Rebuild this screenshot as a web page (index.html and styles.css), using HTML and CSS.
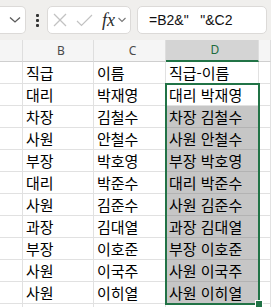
FILE: index.html
```html
<!doctype html>
<html lang="ko">
  <head>
    <meta charset="UTF-8" />
    <title>Sheet</title>
    <link rel="stylesheet" href="styles.css">
  </head>
  <body>
    <div class="toolbar">
      <div class="namebox">
        <svg class="chev" width="12" height="8" viewBox="0 0 12 8"><polyline points="1,1.5 6,6 11,1.5" /></svg>
      </div>
      <div class="dots"><span></span><span></span><span></span></div>
      <div class="btngroup">
        <svg class="btn-icon" width="14" height="14" viewBox="0 0 14 14"><line x1="1" y1="1" x2="13" y2="13" /><line x1="13" y1="1" x2="1" y2="13" /></svg>
        <svg class="btn-icon" width="17" height="13" viewBox="0 0 17 13"><polyline points="1,7 5.5,11.5 16,1" /></svg>
        <span class="fx">fx</span>
        <svg class="chev small" width="8" height="6" viewBox="0 0 8 6"><polyline points="0.5,1 4,4.5 7.5,1" /></svg>
      </div>
      <div class="formula">=B2&amp;"   "&amp;C2</div>
    </div>

    <div class="sheet">
      <div class="hd"></div>
      <div class="hd">B</div>
      <div class="hd">C</div>
      <div class="hd active">D</div>
      <div class="hd"></div>

      <div class="c"></div><div class="c">직급</div><div class="c">이름</div><div class="c">직급-이름</div><div class="c"></div>
      <div class="c"></div><div class="c">대리</div><div class="c">박재영</div><div class="c">대리 박재영</div><div class="c"></div>
      <div class="c"></div><div class="c">차장</div><div class="c">김철수</div><div class="c hl">차장 김철수</div><div class="c"></div>
      <div class="c"></div><div class="c">사원</div><div class="c">안철수</div><div class="c hl">사원 안철수</div><div class="c"></div>
      <div class="c"></div><div class="c">부장</div><div class="c">박호영</div><div class="c hl">부장 박호영</div><div class="c"></div>
      <div class="c"></div><div class="c">대리</div><div class="c">박준수</div><div class="c hl">대리 박준수</div><div class="c"></div>
      <div class="c"></div><div class="c">사원</div><div class="c">김준수</div><div class="c hl">사원 김준수</div><div class="c"></div>
      <div class="c"></div><div class="c">과장</div><div class="c">김대열</div><div class="c hl">과장 김대열</div><div class="c"></div>
      <div class="c"></div><div class="c">부장</div><div class="c">이호준</div><div class="c hl">부장 이호준</div><div class="c"></div>
      <div class="c"></div><div class="c">사원</div><div class="c">이국주</div><div class="c hl">사원 이국주</div><div class="c"></div>
      <div class="c"></div><div class="c">사원</div><div class="c">이히열</div><div class="c hl">사원 이히열</div><div class="c"></div>
      <div class="c"></div><div class="c"></div><div class="c"></div><div class="c"></div><div class="c"></div>

      <div class="selection"><span class="handle"></span></div>
    </div>
  </body>
</html>
```

FILE: styles.css
```css
body {
  margin: 0;
  background: #ffffff;
  font-family: "Noto Sans", "Noto Sans CJK KR", sans-serif;
  overflow: hidden;
  width: 271px;
  height: 307px;
}

/* formula bar */
.toolbar {
  height: 40px;
  background: #f0efed;
  display: flex;
  align-items: center;
  box-sizing: border-box;
}

.namebox {
  width: 26px;
  height: 28px;
  box-sizing: border-box;
  background: #fff;
  border: 1px solid #dcdad8;
  border-left: none;
  border-radius: 0 5px 5px 0;
  display: flex;
  align-items: center;
  justify-content: flex-end;
  padding-right: 4px;
}

.chev polyline {
  fill: none;
  stroke: #5a5a5a;
  stroke-width: 1.3;
}

.chev.small polyline {
  stroke: #777;
  stroke-width: 1.1;
}

.dots {
  width: 4px;
  margin: 0 8px 0 9px;
  display: flex;
  flex-direction: column;
  align-items: center;
  gap: 2px;
}

.dots span {
  width: 3px;
  height: 3px;
  background: #333;
  border-radius: 1px;
}

.btngroup {
  width: 84px;
  height: 28px;
  box-sizing: border-box;
  background: #fff;
  border: 1px solid #dcdad8;
  border-radius: 5px;
  display: flex;
  align-items: center;
  padding-left: 5px;
}

.btn-icon line,
.btn-icon polyline {
  fill: none;
  stroke: #c2c2c2;
  stroke-width: 1.2;
}

.btn-icon + .btn-icon {
  margin-left: 9px;
}

.fx {
  font-family: "Liberation Serif", serif;
  font-style: italic;
  font-size: 18px;
  color: #2b2b2b;
  margin-left: 9px;
  margin-right: 3px;
  line-height: 1;
}

.formula {
  margin-left: 6px;
  width: 130px;
  height: 28px;
  box-sizing: border-box;
  background: #fff;
  border: 1px solid #dcdad8;
  border-radius: 5px;
  padding-left: 11px;
  font-family: "Liberation Sans", sans-serif;
  font-size: 14px;
  line-height: 26px;
  color: #111;
  white-space: pre;
}

/* grid */
.sheet {
  display: grid;
  grid-template-columns: 23px 71px 72px 93px 1fr;
  grid-template-rows: repeat(13, 22px);
  height: 267px;
  overflow: hidden;
  position: relative;
}

.hd {
  background: #f5f5f5;
  border-right: 1px solid #dedede;
  border-bottom: 1px solid #cfcfcf;
  font-size: 12px;
  color: #4a4a4a;
  text-align: center;
  line-height: 21px;
  padding-left: 6px;
}

.hd.active {
  background: #d4d4d4;
  color: #1d6b3b;
  border-bottom: 2px solid #217346;
  line-height: 20px;
}

.c {
  border-right: 1px solid #e1e1e1;
  border-bottom: 1px solid #e1e1e1;
  font-family: "Noto Sans CJK KR", sans-serif;
  font-size: 15px;
  line-height: 21px;
  padding-left: 3px;
  color: #000;
  white-space: nowrap;
  overflow: hidden;
}

.c.hl {
  background: #c6c6c6;
  border-bottom-color: #b3b3b3;
}

/* selection outline drawn over the D3:D12 grid area */
.selection {
  position: absolute;
  grid-column: 4 / 5;
  grid-row: 3 / 13;
  top: -1px;
  left: -1px;
  right: -1px;
  bottom: -1px;
  border: 2px solid #217346;
  pointer-events: none;
}

.handle {
  position: absolute;
  right: -5px;
  bottom: -5px;
  width: 6px;
  height: 6px;
  background: #217346;
  border: 1px solid #fff;
}
```
